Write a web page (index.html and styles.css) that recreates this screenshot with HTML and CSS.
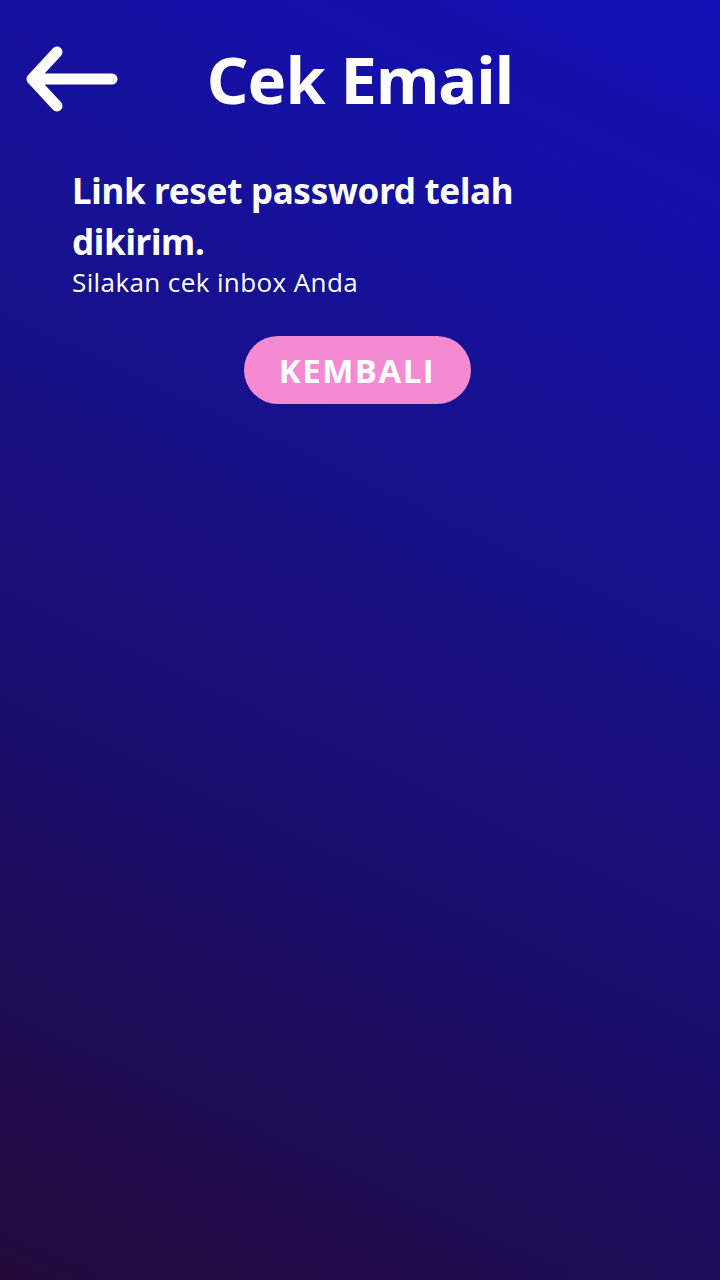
FILE: index.html
```html
<!DOCTYPE html>
<html lang="id">
<head>
<meta charset="utf-8">
<title>Cek Email</title>
<link rel="stylesheet" href="styles.css">
</head>
<body>
<div class="screen">
  <header class="topbar">
    <a class="back" aria-label="Kembali">
      <svg width="92" height="68" viewBox="0 0 92 68">
        <path d="M6 34 H86 M31 7 L6 34 L31 61" fill="none" stroke="#fff" stroke-width="11" stroke-linecap="round" stroke-linejoin="round"/>
      </svg>
    </a>
    <h1 class="title">Cek Email</h1>
    <span></span>
  </header>
  <section class="message">
    <h2 class="headline">Link reset password telah<br>dikirim.</h2>
    <p class="sub">Silakan cek inbox Anda</p>
  </section>
  <div class="actions">
    <button class="btn">KEMBALI</button>
  </div>
</div>
</body>
</html>
```
FILE: styles.css
```css
html, body {
  margin: 0;
  padding: 0;
}
body {
  width: 720px;
  height: 1280px;
  overflow: hidden;
  font-family: "Open Sans", "Noto Sans", sans-serif;
}
.screen {
  width: 720px;
  height: 1280px;
  box-sizing: border-box;
  background: linear-gradient(205deg, #130fb6 0%, #17118f 35%, #1c0d66 70%, #240a3a 100%);
  color: #fff;
  padding-top: 40px;
}
.topbar {
  display: grid;
  grid-template-columns: 1fr auto 1fr;
  align-items: center;
  height: 78px;
}
.back {
  display: flex;
  padding-left: 26px;
}
.title {
  margin: 0;
  font-family: "Noto Sans", sans-serif;
  font-weight: 700;
  font-size: 65px;
  letter-spacing: -1px;
  line-height: 78px;
}
.message {
  padding: 47px 72px 0;
}
.headline {
  margin: 0;
  font-family: "Noto Sans", sans-serif;
  font-weight: 700;
  font-size: 35px;
  line-height: 51px;
  letter-spacing: -0.3px;
}
.sub {
  margin: 0;
  font-family: "Open Sans", sans-serif;
  font-size: 26px;
  line-height: 30px;
  letter-spacing: 0.4px;
}
.actions {
  display: flex;
  justify-content: center;
  padding-top: 39px;
  padding-right: 6px;
}
.btn {
  width: 227px;
  height: 68px;
  border: none;
  border-radius: 34px;
  background: #f48bd2;
  color: #fff;
  font-family: "Open Sans", sans-serif;
  font-weight: 700;
  font-size: 33px;
  letter-spacing: 1.5px;
  padding: 0;
}
```
